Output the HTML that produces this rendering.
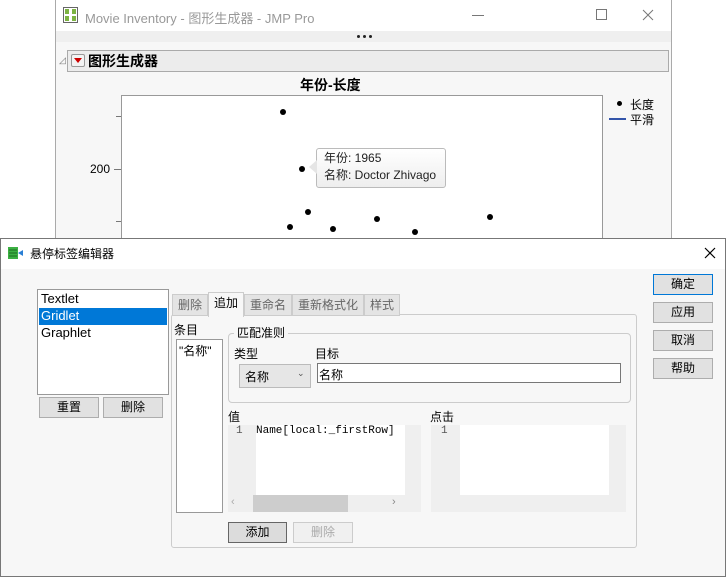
<!DOCTYPE html>
<html><head><meta charset="utf-8"><style>
*{box-sizing:border-box;margin:0;padding:0}
body{width:726px;height:577px;position:relative;overflow:hidden;background:#fff;font-family:"Liberation Sans","Noto Sans CJK SC",sans-serif;font-size:12px;color:#000}
.a{position:absolute}
.btn{position:absolute;background:#e1e1e1;border:1px solid #adadad;text-align:center;font-size:12px;line-height:17px}
.dot{position:absolute;width:6px;height:6px;border-radius:50%;background:#000}
.sd{position:absolute;top:35px;width:3px;height:3px;background:#222;border-radius:50%}
.tab{position:absolute;top:294px;height:22px;background:#e4e4e4;border:1px solid #ccc;color:#666;font-size:12px;line-height:20px;text-align:center}
</style></head><body>
<div class="a" style="left:55px;top:0;width:617px;height:240px;border:1px solid #aaa;border-top:none;background:#f7f7f7"></div>
<div class="a" style="left:56px;top:0;width:615px;height:31px;background:#fff"></div>
<svg class="a" style="left:63px;top:7px" width="15" height="16"><rect x="0.5" y="0.5" width="14" height="15" fill="#fff" stroke="#666"/><rect x="2" y="2" width="4" height="5" fill="#7cb342"/><rect x="9" y="2" width="4" height="5" fill="#7cb342"/><rect x="2" y="9" width="4" height="5" fill="#7cb342"/><rect x="9" y="9" width="4" height="5" fill="#7cb342"/></svg>
<div class="a" style="left:85px;top:8px;font-size:13px;color:#999">Movie Inventory - 图形生成器 - JMP Pro</div>
<div class="a" style="left:472px;top:15px;width:12px;height:1px;background:#777"></div>
<div class="a" style="left:596px;top:9px;width:11px;height:11px;border:1px solid #777"></div>
<svg class="a" style="left:642px;top:9px" width="12" height="12"><path d="M1 1L11 11M11 1L1 11" stroke="#777" stroke-width="1"/></svg>
<div class="a" style="left:56px;top:31px;width:615px;height:11px;background:#efefef"></div>
<div class="sd" style="left:357px"></div>
<div class="sd" style="left:363px"></div>
<div class="sd" style="left:369px"></div>
<div class="a" style="left:59px;top:55px;font-size:9px;color:#777">◿</div>
<div class="a" style="left:67px;top:50px;width:602px;height:22px;background:#ececec;border:1px solid #aaa"></div>
<div class="a" style="left:71px;top:54px;width:14px;height:13px;border:1px solid #999;background:#f3f3f3;border-radius:2px"><div style="margin:3px auto;width:0;height:0;border-left:4px solid transparent;border-right:4px solid transparent;border-top:5px solid #c00"></div></div>
<div class="a" style="left:88px;top:51px;font-size:14px;font-weight:bold">图形生成器</div>
<div class="a" style="left:300px;top:75px;font-size:14px;font-weight:bold">年份-长度</div>
<div class="a" style="left:121px;top:95px;width:482px;height:145px;background:#fff;border:1px solid #999"></div>
<div class="a" style="left:116px;top:116px;width:5px;height:1px;background:#777"></div>
<div class="a" style="left:114px;top:169px;width:7px;height:1px;background:#777"></div>
<div class="a" style="left:116px;top:221px;width:5px;height:1px;background:#777"></div>
<div class="a" style="left:90px;top:162px;font-size:12px">200</div>
<div class="dot" style="left:280px;top:109px"></div>
<div class="dot" style="left:299px;top:166px"></div>
<div class="dot" style="left:305px;top:209px"></div>
<div class="dot" style="left:287px;top:224px"></div>
<div class="dot" style="left:330px;top:226px"></div>
<div class="dot" style="left:374px;top:216px"></div>
<div class="dot" style="left:412px;top:229px"></div>
<div class="dot" style="left:487px;top:214px"></div>
<div class="a" style="left:316px;top:148px;width:130px;height:40px;border:1px solid #bbb;border-radius:3px;background:linear-gradient(#fff,#eee)"></div>
<div class="a" style="left:309px;top:160px;width:0;height:0;border-top:7px solid transparent;border-bottom:7px solid transparent;border-right:8px solid #e5e5e5"></div>
<div class="a" style="left:324px;top:150px;font-size:12px;line-height:17px;color:#222">年份: 1965<br>名称: Doctor Zhivago</div>
<div class="dot" style="left:617px;top:101px;width:5px;height:5px"></div>
<div class="a" style="left:630px;top:96px;font-size:12px">长度</div>
<div class="a" style="left:609px;top:118px;width:17px;height:2px;background:#3355aa"></div>
<div class="a" style="left:630px;top:111px;font-size:12px">平滑</div>
<div class="a" style="left:0;top:238px;width:726px;height:339px;background:#f7f7f7;border:1px solid #777"></div>
<div class="a" style="left:1px;top:239px;width:724px;height:30px;background:#fff"></div>
<svg class="a" style="left:8px;top:246px" width="16" height="14"><rect x="0" y="1" width="10" height="12" fill="#3cb043"/><path d="M1 4h8M1 7h8M1 10h8" stroke="#1a6b1f"/><path d="M10 7l5-3v6z" fill="#2a7fd4"/></svg>
<div class="a" style="left:30px;top:245px;font-size:12px">悬停标签编辑器</div>
<svg class="a" style="left:704px;top:247px" width="12" height="12"><path d="M1 1L11 11M11 1L1 11" stroke="#000" stroke-width="1.2"/></svg>
<div class="a" style="left:37px;top:289px;width:132px;height:106px;background:#fff;border:1px solid #999"></div>
<div class="a" style="left:41px;top:291px;font-size:13px">Textlet</div>
<div class="a" style="left:39px;top:308px;width:128px;height:17px;background:#0078d7"></div>
<div class="a" style="left:41px;top:308px;font-size:13px;color:#fff">Gridlet</div>
<div class="a" style="left:41px;top:325px;font-size:13px">Graphlet</div>
<div class="btn" style="left:39px;top:397px;width:60px;height:21px;line-height:19px">重置</div>
<div class="btn" style="left:103px;top:397px;width:60px;height:21px;line-height:19px">删除</div>
<div class="a" style="left:171px;top:314px;width:466px;height:234px;border:1px solid #ccc;border-radius:3px"></div>
<div class="tab" style="left:172px;width:36px">删除</div>
<div class="tab" style="left:208px;top:292px;height:25px;width:36px;background:#f7f7f7;color:#000;border-bottom:none">追加</div>
<div class="tab" style="left:244px;width:48px">重命名</div>
<div class="tab" style="left:292px;width:72px">重新格式化</div>
<div class="tab" style="left:364px;width:36px">样式</div>
<div class="a" style="left:174px;top:321px;font-size:12px">条目</div>
<div class="a" style="left:176px;top:339px;width:47px;height:174px;background:#fff;border:1px solid #999"></div>
<div class="a" style="left:179px;top:342px;font-size:12px">"名称"</div>
<div class="a" style="left:228px;top:333px;width:403px;height:70px;border:1px solid #ccc;border-radius:4px"></div>
<div class="a" style="left:234px;top:324px;background:#f7f7f7;padding:0 3px;font-size:12px">匹配准则</div>
<div class="a" style="left:234px;top:345px;font-size:12px">类型</div>
<div class="a" style="left:239px;top:364px;width:72px;height:24px;background:#e6e6e6;border:1px solid #bbb"></div>
<div class="a" style="left:245px;top:368px;font-size:12px">名称</div>
<div class="a" style="left:297px;top:368px;font-size:9px;color:#555">⌄</div>
<div class="a" style="left:315px;top:345px;font-size:12px">目标</div>
<div class="a" style="left:317px;top:363px;width:304px;height:20px;background:#fff;border:1px solid #777"></div>
<div class="a" style="left:319px;top:366px;font-size:12px">名称</div>
<div class="a" style="left:228px;top:408px;font-size:12px">值</div>
<div class="a" style="left:228px;top:425px;width:193px;height:87px;background:#efefef"></div>
<div class="a" style="left:256px;top:425px;width:149px;height:70px;background:#fff"></div>
<div class="a" style="left:236px;top:425px;font-family:'Liberation Mono',monospace;font-size:11px;color:#555">1</div>
<div class="a" style="left:256px;top:425px;font-family:'Liberation Mono',monospace;font-size:11px">Name[local:_firstRow]</div>
<div class="a" style="left:253px;top:495px;width:95px;height:17px;background:#cdcdcd"></div>
<div class="a" style="left:231px;top:496px;color:#aaa;font-size:11px">‹</div>
<div class="a" style="left:392px;top:496px;color:#888;font-size:11px">›</div>
<div class="a" style="left:430px;top:408px;font-size:12px">点击</div>
<div class="a" style="left:431px;top:425px;width:195px;height:87px;background:#efefef"></div>
<div class="a" style="left:460px;top:425px;width:149px;height:70px;background:#fff"></div>
<div class="a" style="left:441px;top:425px;font-family:'Liberation Mono',monospace;font-size:11px;color:#555">1</div>
<div class="btn" style="left:228px;top:522px;width:59px;height:21px;line-height:19px;border-color:#666;background:#dcdcdc">添加</div>
<div class="btn" style="left:293px;top:522px;width:60px;height:21px;line-height:19px;color:#aaa;background:#f0f0f0;border-color:#ccc">删除</div>
<div class="btn" style="left:653px;top:274px;width:60px;height:21px;line-height:19px;border-color:#0078d7">确定</div>
<div class="btn" style="left:653px;top:302px;width:60px;height:21px;line-height:19px">应用</div>
<div class="btn" style="left:653px;top:330px;width:60px;height:21px;line-height:19px">取消</div>
<div class="btn" style="left:653px;top:358px;width:60px;height:21px;line-height:19px">帮助</div>
</body></html>
